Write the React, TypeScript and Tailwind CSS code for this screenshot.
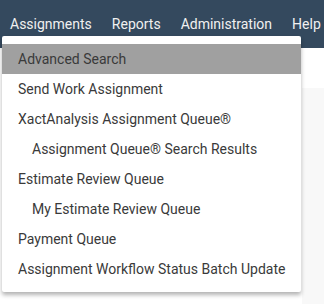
import React from "react";

const items: { label: string; indent?: boolean; active?: boolean }[] = [
  { label: "Advanced Search", active: true },
  { label: "Send Work Assignment" },
  { label: "XactAnalysis Assignment Queue®" },
  { label: "Assignment Queue® Search Results", indent: true },
  { label: "Estimate Review Queue" },
  { label: "My Estimate Review Queue", indent: true },
  { label: "Payment Queue" },
  { label: "Assignment Workflow Status Batch Update" },
];

export default function App() {
  return (
    <div
      className="relative w-[324px] h-[304px] overflow-hidden bg-white"
      style={{ fontFamily: "Roboto, 'Liberation Sans', sans-serif" }}
    >
      <nav className="h-[48px] bg-[#34495e] flex items-start pt-[14px] text-[14px] text-[#f0f0f0]">
        <span className="px-[10px]">Assignments</span>
        <span className="px-[10px]">Reports</span>
        <span className="px-[10px]">Administration</span>
        <span className="px-[10px]">Help</span>
      </nav>
      <div className="flex">
        <div className="w-[302px]" />
        <div className="flex-1 mt-[40px] h-[220px] bg-[#f8f8f8]" />
      </div>
      <div className="absolute left-[2px] top-[36px] w-[299px] bg-white rounded-[2px] pt-[8px] pb-[8px] shadow-[0_3px_4px_rgba(0,0,0,0.3)]">
        {items.map((it) => (
          <div
            key={it.label}
            className={`h-[30px] flex items-center text-[14px] text-[#3a3a3a] ${
              it.indent ? "pl-[30px]" : "pl-[16px]"
            } ${it.active ? "bg-[#a0a0a0]" : ""}`}
          >
            {it.label}
          </div>
        ))}
      </div>
    </div>
  );
}
